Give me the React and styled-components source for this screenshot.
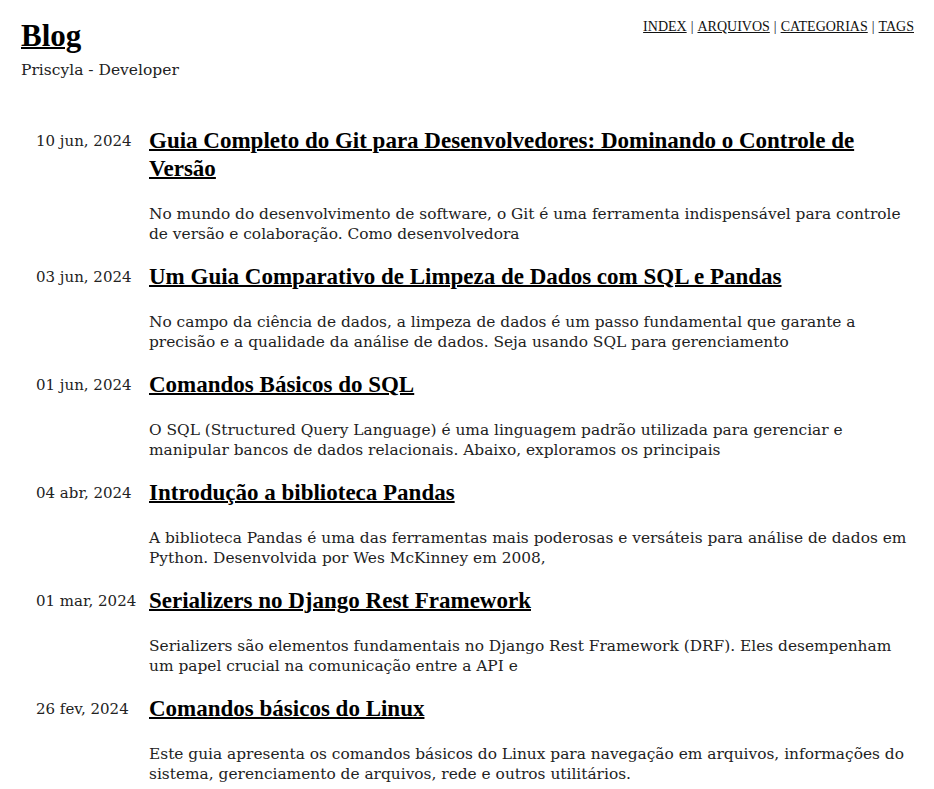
import React from 'react';
import styled, { createGlobalStyle } from 'styled-components';

const GlobalStyle = createGlobalStyle`
  body {
    margin: 0;
    background: #fff;
    color: #222;
    font-family: "DejaVu Serif", serif;
  }
  a { color: inherit; }
`

const Page = styled.div`
  padding: 14px 20px 0 21px;
`
const Header = styled.header`
  display: flex;
  justify-content: space-between;
  align-items: flex-start;
`
const Brand = styled.div`
  display: flex;
  flex-direction: column;
`
const BlogTitle = styled.a`
  font-family: "Liberation Serif", serif;
  font-weight: bold;
  font-size: 31px;
  line-height: 44px;
  color: #000;
  text-decoration: underline;
  text-decoration-thickness: 2px;
`
const Subtitle = styled.span`
  font-size: 15.5px;
  line-height: 24px;
  color: #222;
`
const Nav = styled.nav`
  font-family: "Liberation Serif", serif;
  font-size: 14px;
  color: #111;
  padding-top: 5px;
`
const NavLink = styled.a`
  color: #111;
`
const Sep = styled.span`
  margin: 0 4px;
`
const PostList = styled.main`
  display: flex;
  flex-direction: column;
  gap: 19px;
  padding: 45px 0 0 15px;
`
const Post = styled.article`
  display: grid;
  grid-template-columns: 113px 1fr;
`
const PostDate = styled.span`
  font-size: 15px;
  line-height: 28px;
  color: #222;
  white-space: nowrap;
`
const PostBody = styled.div`
  display: flex;
  flex-direction: column;
  gap: 21px;
`
const PostTitle = styled.a`
  font-family: "Liberation Serif", serif;
  font-weight: bold;
  font-size: 23px;
  line-height: 28px;
  color: #000;
  text-decoration-thickness: 2px;
`
const Excerpt = styled.p`
  margin: 0;
  font-size: 15.4px;
  line-height: 20px;
  color: #222;
`

const posts = [
  {
    date: '10 jun, 2024',
    title: 'Guia Completo do Git para Desenvolvedores: Dominando o Controle de Versão',
    excerpt: 'No mundo do desenvolvimento de software, o Git é uma ferramenta indispensável para controle de versão e colaboração. Como desenvolvedora',
  },
  {
    date: '03 jun, 2024',
    title: 'Um Guia Comparativo de Limpeza de Dados com SQL e Pandas',
    excerpt: 'No campo da ciência de dados, a limpeza de dados é um passo fundamental que garante a precisão e a qualidade da análise de dados. Seja usando SQL para gerenciamento',
  },
  {
    date: '01 jun, 2024',
    title: 'Comandos Básicos do SQL',
    excerpt: 'O SQL (Structured Query Language) é uma linguagem padrão utilizada para gerenciar e manipular bancos de dados relacionais. Abaixo, exploramos os principais',
  },
  {
    date: '04 abr, 2024',
    title: 'Introdução a biblioteca Pandas',
    excerpt: 'A biblioteca Pandas é uma das ferramentas mais poderosas e versáteis para análise de dados em Python. Desenvolvida por Wes McKinney em 2008,',
  },
  {
    date: '01 mar, 2024',
    title: 'Serializers no Django Rest Framework',
    excerpt: 'Serializers são elementos fundamentais no Django Rest Framework (DRF). Eles desempenham um papel crucial na comunicação entre a API e',
  },
  {
    date: '26 fev, 2024',
    title: 'Comandos básicos do Linux',
    excerpt: 'Este guia apresenta os comandos básicos do Linux para navegação em arquivos, informações do sistema, gerenciamento de arquivos, rede e outros utilitários.',
  },
];

const navItems = ['INDEX', 'ARQUIVOS', 'CATEGORIAS', 'TAGS'];

export default function App() {
  return (
    <>
      <GlobalStyle />
      <Page>
        <Header>
          <Brand>
            <BlogTitle href="#">Blog</BlogTitle>
            <Subtitle>Priscyla - Developer</Subtitle>
          </Brand>
          <Nav>
            {navItems.map((item, i) => (
              <React.Fragment key={item}>
                {i > 0 && <Sep>|</Sep>}
                <NavLink href="#">{item}</NavLink>
              </React.Fragment>
            ))}
          </Nav>
        </Header>
        <PostList>
          {posts.map(post => (
            <Post key={post.title}>
              <PostDate>{post.date}</PostDate>
              <PostBody>
                <PostTitle href="#">{post.title}</PostTitle>
                <Excerpt>{post.excerpt}</Excerpt>
              </PostBody>
            </Post>
          ))}
        </PostList>
      </Page>
    </>
  );
}
